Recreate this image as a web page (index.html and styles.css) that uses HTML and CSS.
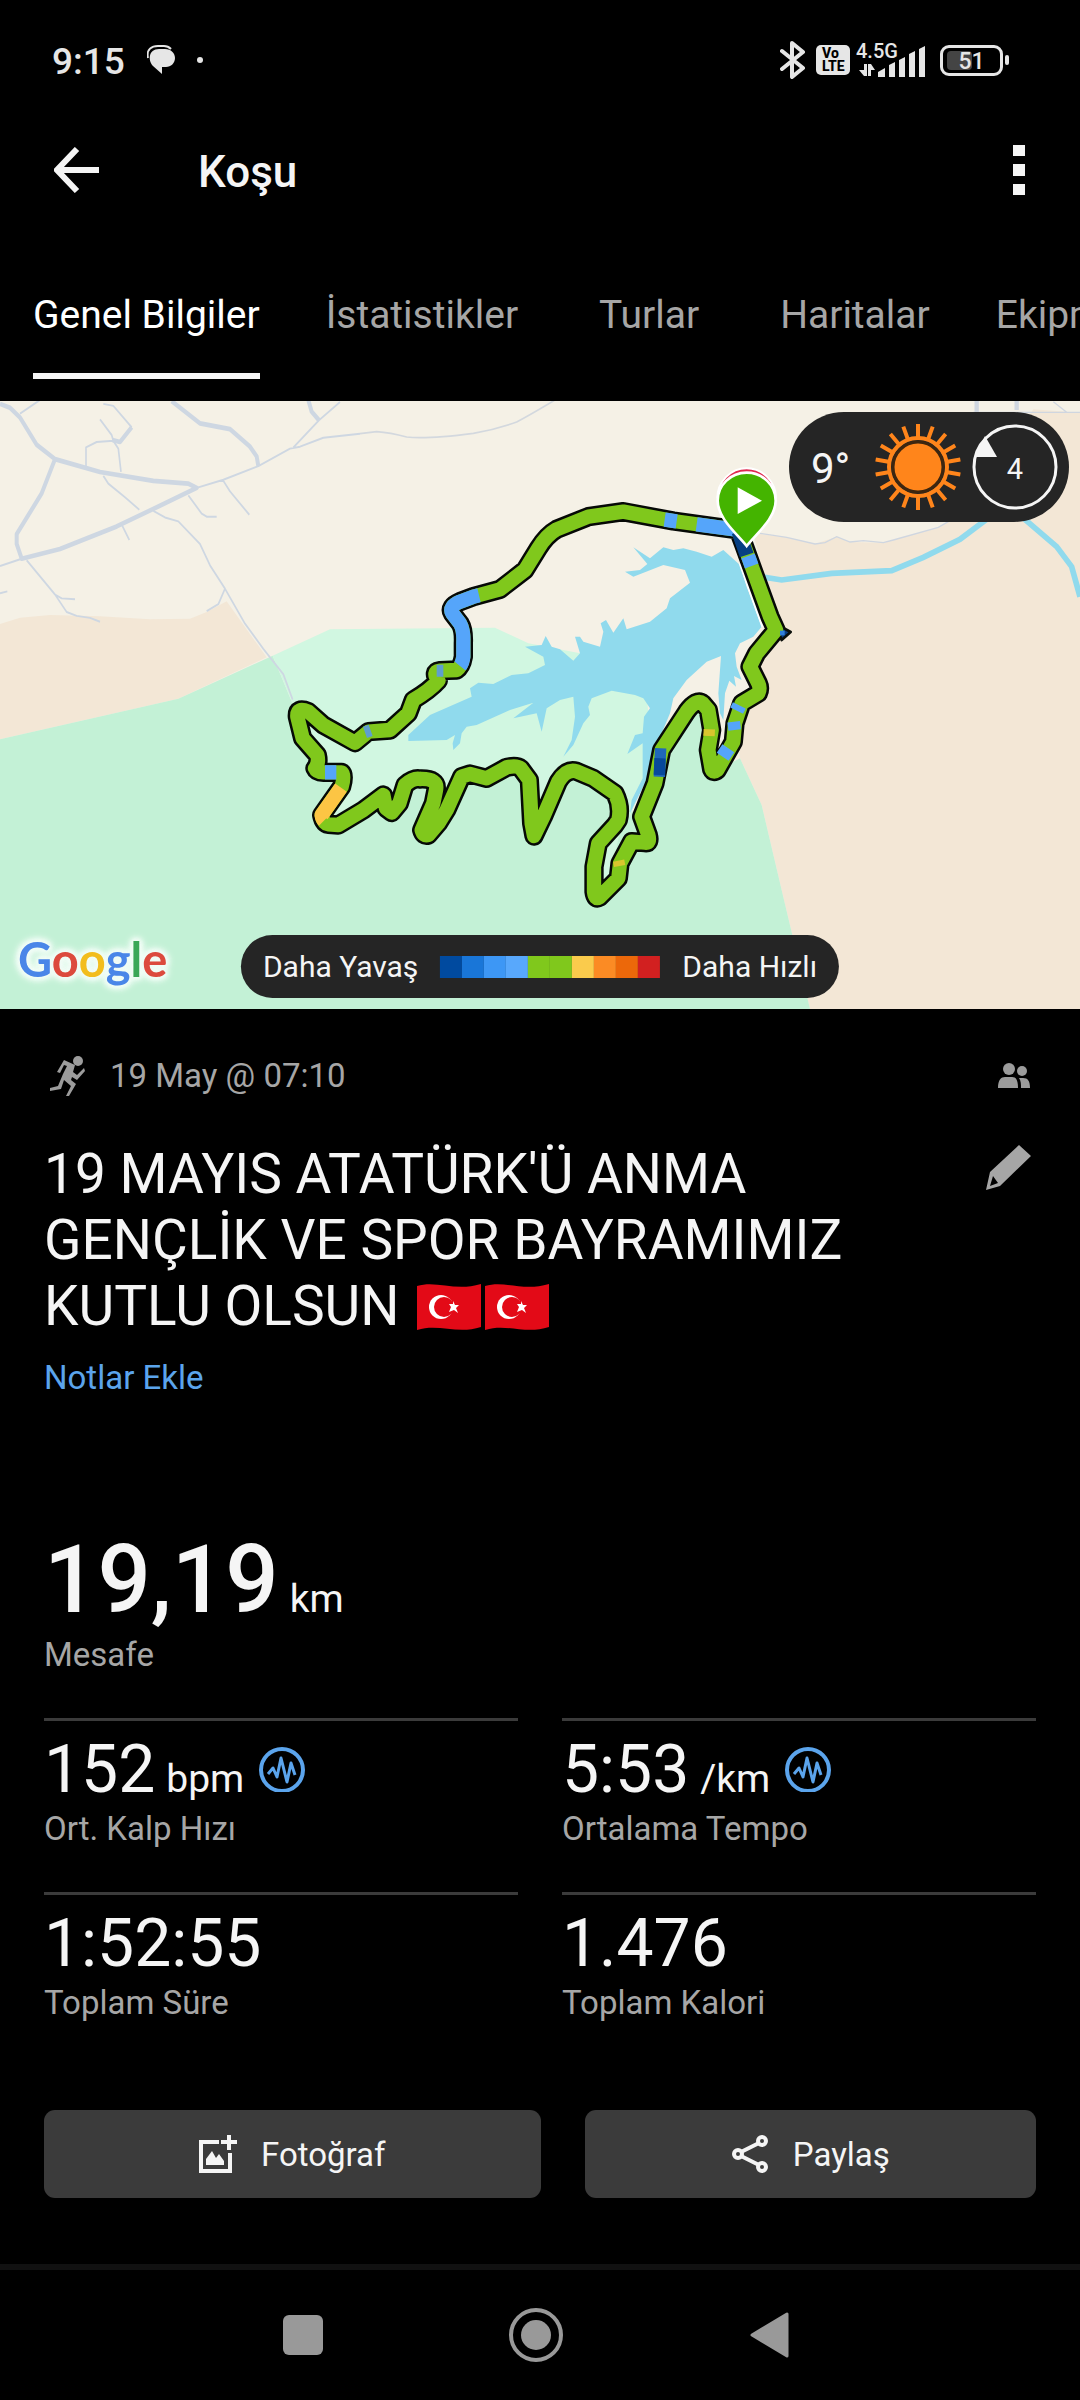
FILE: index.html
```html
<!DOCTYPE html>
<html lang="tr">
<head>
    <meta charset="UTF-8">
    <meta name="viewport" content="width=device-width, initial-scale=1.0">
    <title>Koşu</title>
    <link rel="stylesheet" href="styles.css">
</head>
<body>
    <div class="status-bar">
        <span class="clock">9:15</span>
        <svg class="chat-icon" width="28" height="30" viewBox="0 0 28 30">
            <path d="M1 13C-1 4 5 1 11 1h6c3 0 5 1 7 3" fill="none" stroke="#e6e6e6" stroke-width="2"/>
            <path d="M12 4h6c6 0 10 4 10 9s-4 9-9 9h-4v7L6 21C1 16 1 4 12 4z" fill="#e6e6e6"/>
        </svg>
        <span class="dot"></span>
        <div class="status-icons">
            <svg width="26" height="40" viewBox="0 0 26 40">
                <path d="M2 11 23 28 12 37V3l11 9L2 29" fill="none" stroke="#e6e6e6" stroke-width="4" stroke-linejoin="round" stroke-linecap="round"/>
            </svg>
            <span class="volte"><span>Vo</span><span>LTE</span></span>
            <div class="network">
                <span class="network-type">4.5G</span>
                <svg width="70" height="34" viewBox="0 0 70 34">
                    <g fill="#e6e6e6">
                        <path d="M3 27 8 33h3V21H8v6zM12 33h3v-6h4l-4-6h-3z"/>
                        <path d="M22 34v-5l7-4v9zM33 34V22l6-3v15zM43 34V17l6-3v20zM53 34V11l6-3v26zM63 34V6l6-3v31z"/>
                    </g>
                </svg>
            </div>
            <div class="battery"><span class="battery-level"></span><span class="battery-text">51</span></div>
            <span class="battery-tip"></span>
        </div>
    </div>

    <header class="app-bar">
        <button class="icon-button" aria-label="Geri">
            <svg width="46" height="46" viewBox="0 0 46 46">
                <path d="M23 2 3 23l20 21M3 23h42" fill="none" stroke="#f5f5f5" stroke-width="6"/>
            </svg>
        </button>
        <h1>Koşu</h1>
        <button class="icon-button more-button" aria-label="Menü">
            <svg width="12" height="50" viewBox="0 0 12 50">
                <path d="M0 0h12v11H0zM0 19h12v12H0zM0 39h12v11H0z" fill="#f5f5f5"/>
            </svg>
        </button>
    </header>

    <nav class="tabs">
        <button class="tab active"><span>Genel Bilgiler</span></button>
        <button class="tab"><span>İstatistikler</span></button>
        <button class="tab"><span>Turlar</span></button>
        <button class="tab"><span>Haritalar</span></button>
        <button class="tab"><span>Ekipman</span></button>
    </nav>

    <section class="map">
        <svg class="map-canvas" viewBox="-840 -237 3240 1824">
            <rect x="-840" y="-237" width="3240" height="1824" fill="#f5f1e6"/>
            <!-- land -->
            <path d="M-840 432-780 413-690 405-540 409-390 418-270 416-220 396-160 364-40 532-305 656-840 778z" fill="#f3e7d6"/>
            <path d="M1420 160 1520 172 1605 192 1670 170 1710 186 1810 188 1975 142 2010 120 2080 60 2260-212 2400-202V1587H1590L1512 1260 1445 975 1380 835 1365 730 1440 635 1410 560 1490 450z" fill="#f3e7d6"/>
            <path d="M-840 778-305 656-22 527 52 705 400 860 1000 870 1060 1000 1125 910 1145 810 1220 695 1255 665 1290 700 1300 875 1380 835 1445 975 1512 1260 1590 1587H-840z" fill="#c3f1d6"/>
            <path d="M-22 527 150 448 645 443 745 490 900 520 1100 640 1105 700 1090 900 1050 1010 1020 1050 990 1200 955 1230 955 1090 1020 990 1005 940 940 895 880 872 835 905 762 1070 755 1030 748 900 720 860 680 862 620 895 570 882 545 890 475 1030 430 1060 465 950 465 905 420 897 375 915 335 1000 310 945 175 1037 125 1005 192 910 190 877 105 870 112 825 68 775 52 705z" fill="#d1f7e1"/>
            <!-- water -->
            <g transform="translate(780 -120)" fill="#90daed">
                <path d="M550 330 600 375 620 440 665 560 640 590 600 610 585 640 590 680 605 720 582 708 588 740 568 722 555 760 550 840 540 820 535 760 543 648 500 665 440 720 400 775 390 820 365 880 340 930 330 1000 300 1060 270 1120 275 1080 308 1015 308 910 262 942 285 885 308 880 312 830 330 805 310 775 285 765 215 752 155 775 145 800 150 825 130 850 100 915 70 950 95 900 105 830 100 770 60 780 20 805 5 875-10 820-80 835-20 788-90 810-190 855-220 860-235 880-240 910-260 930-262 910-255 885-280 900-395 903-395 885-330 825-205 770-210 745-185 728-140 732-85 705-35 700 15 675 10 650-45 620 5 615 17 588 35 620 60 628 100 662 120 640 105 590 120 590 130 605 180 620 190 575 182 550 198 540 220 578 250 535 260 568 330 545 380 505 390 475 450 428 435 390 370 375 280 410 255 395 300 390 322 372 280 322 330 355 370 322 400 330 430 325 470 335 515 350z"/>
                <path d="M600 370 625 440 668 560" fill="none" stroke="#fff" stroke-width="8"/>
            </g>
            <g transform="translate(1440 -240)" fill="none">
                <path d="M0 530 65 540 215 520 395 512 490 472 600 418 690 350M785 350 890 440 935 500 960 590" stroke="#90daed" stroke-width="17"/>
                <path d="M0 400 80 412 165 432 195 428 230 410 270 426 310 422 370 428 400 420 535 382 565 365M640 37h320M880 5l40 32" stroke="#cfd6e0" stroke-width="4"/>
                <path d="M650 0V40M770 0V30" stroke="#cfd6e0" stroke-width="13"/>
            </g>
            <!-- roads -->
            <g transform="translate(-840 -240) scale(1 1.167)" fill="none" stroke="#ced7e2" stroke-linejoin="round">
                <path d="M0 10 30 20 60 45 110 115 165 152 300 185 460 208 565 215 590 226 460 280 350 325 180 383 65 408 50 370 50 345 125 240 165 152M515 3 600 60 690 75 750 120 770 145 775 170M925 0 935 30 957 52M395 70 360 108 337 103" stroke-width="12"/>
                <path d="M60 35 120 0M310 10 340 15 395 70M300 50 335 90 340 105M258 172V122L290 108 340 105 355 125 363 185M310 195 325 215 375 250 418 282M590 226 670 205 775 170 870 125 900 120 970 97 1080 87M880 122 957 52 1020 5M668 205 690 235 748 295M565 245 605 292 620 300 650 300M365 320 388 360M460 285 495 302 535 312 600 370 630 425 675 485 735 575 790 640 850 705 878 770M675 485 655 525 620 543M0 427 65 408M80 412 165 500 185 510 225 512M165 500 200 545 230 555 270 560 300 570M0 497 22 492" stroke-width="5"/>
            </g>
            <path d="M240-139 290-145Q330-142 380-129 440-122 580-140 650-152 710-174 750-195 825-240" fill="none" stroke="#d3d8de" stroke-width="5"/>
            <!-- route -->
            <defs>
                <path id="route" d="M1375 150 1180 123 1030 95 925 110 830 148 Q800 165 775 205L735 270 660 328 580 350 540 365Q505 380 517 400L540 430Q552 450 550 490V530Q545 560 530 570L480 572Q455 575 475 602 450 630 400 660L385 700 330 750 265 755 225 788 130 735 85 695Q50 680 52 710L68 775 112 825Q118 850 105 865 110 877 130 877H185Q195 885 185 920L125 1005Q130 1030 145 1033L175 1035 250 990 310 945 318 985 335 998 358 970 375 915Q400 893 420 897 475 895 468 930L460 970 425 1050Q430 1070 445 1065L475 1030 500 990 545 890 570 882 620 895 680 862Q710 855 722 865L748 900 755 1030 762 1068 790 1010 835 905Q860 865 890 874L940 895 1005 940Q1025 980 1015 1020L1005 1035 955 1090 942 1160V1235Q945 1260 958 1252L1015 1195 1020 1150 1055 1085 1095 1088Q1112 1090 1105 1065L1085 1010 1125 910 1145 810 1220 695Q1250 655 1268 670L1285 690 1295 750 1285 810 1295 868Q1300 880 1312 870L1360 785 1365 730 1385 670 1435 640Q1442 625 1435 610L1410 560 1430 520 1488 450 1470 410 1390 190z"/>
            </defs>
            <g fill="none" stroke-linejoin="round">
                <use href="#route" stroke="#060906" stroke-width="58"/>
                <path d="M1485 430 1532 456 1505 480z" fill="#0b3f82" stroke="#0a0f0a" stroke-width="8"/>
                <use href="#route" stroke="#80c81c" stroke-width="43"/>
                <g stroke="#55a5fa" stroke-width="43">
                    <path d="M597 346 580 350 540 365Q505 380 517 400L540 430Q552 450 550 490V530Q548 548 540 558"/>
                    <path d="M1154 119 1190 124"/>
                    <path d="M1250 133 1375 150"/>
                    <path d="M1404 228 1415 258"/>
                    <path d="M135 877h34"/>
                    <path d="M1364 750 1361 725" stroke-width="38"/>
                    <path d="M1370 692 1378 676"/>
                    <path d="M1345 805 1328 830"/>
                </g>
                <g stroke="#5f9fce" stroke-width="36">
                    <path d="M470 572h20M255 757 272 751"/>
                </g>
                <path d="M1376 155 1400 225" stroke="#063f82" stroke-width="43"/>
                <path d="M1142 805 1138 890" stroke="#1f68ba" stroke-width="34"/>
                <path d="M1140 835 1138 885" stroke="#07499b" stroke-width="34"/>
                <path d="M183 923 125 1005Q126 1016 132 1022" stroke="#fcc544" stroke-width="43"/>
                <path d="M1288 748 1287 768M1019 1158 1016 1142" stroke="#d9c72e" stroke-width="34"/>
                <path d="M1500 452h14v14h-14z" fill="#2f7fda"/>
            </g>
            <!-- finish and start pins -->
            <path d="M1312 55a88 90 0 0 1 176 0" fill="#e0284f" stroke="#fff" stroke-width="6"/>
            <path d="M1400 198C1370 160 1313 115 1313 62a87 84 0 0 1 174 0C1487 115 1430 160 1400 198z" fill="#44b400" stroke="#fff" stroke-width="8"/>
            <path d="M1373 22v80l73-40z" fill="#fff"/>
        </svg>

        <div class="weather">
            <span class="temperature">9°</span>
            <svg width="88" height="88" viewBox="-44 -44 88 88">
                <g stroke="#ff851b" stroke-width="4">
                    <path id="ray" d="M0-43V-30M0 43V30"/>
                    <use href="#ray" transform="rotate(20)"/>
                    <use href="#ray" transform="rotate(40)"/>
                    <use href="#ray" transform="rotate(60)"/>
                    <use href="#ray" transform="rotate(80)"/>
                    <use href="#ray" transform="rotate(100)"/>
                    <use href="#ray" transform="rotate(120)"/>
                    <use href="#ray" transform="rotate(140)"/>
                    <use href="#ray" transform="rotate(160)"/>
                </g>
                <circle r="29" fill="#252525" stroke="#ff851b" stroke-width="4"/>
                <circle r="25" fill="#ff851b" stroke="#3d2610" stroke-width="3"/>
            </svg>
            <div class="wind">
                <svg width="88" height="88" viewBox="-44 -44 88 88">
                    <circle r="41" fill="none" stroke="#f5f5f5" stroke-width="3"/>
                    <path d="M-30-31-18-10H-40z" fill="#f5f5f5"/>
                </svg>
                <span>4</span>
            </div>
        </div>

        <div class="google-logo"><span class="g-blue">G</span><span class="g-red">o</span><span class="g-yellow">o</span><span class="g-blue">g</span><span class="g-green">l</span><span class="g-red">e</span></div>

        <div class="legend">
            <span>Daha Yavaş</span>
            <div class="legend-scale">
                <i class="speed-1"></i><i class="speed-2"></i><i class="speed-3"></i><i class="speed-4"></i><i class="speed-5"></i><i class="speed-5"></i><i class="speed-6"></i><i class="speed-7"></i><i class="speed-8"></i><i class="speed-9"></i>
            </div>
            <span>Daha Hızlı</span>
        </div>
    </section>

    <main class="details">
        <div class="meta">
            <svg width="46" height="46" viewBox="0 0 46 46">
                <circle cx="34" cy="8" r="5" fill="#9c9c9c"/>
                <path d="M20 7 31 12 29 19 33 22 40 15 41 18 33 27 28 24 27 27 32 31 25 43H22L27 33 20 27 17 36 6 38V35L14 33 19 21 23 13 20 12 16 20 13 19z" fill="#9c9c9c"/>
            </svg>
            <span>19 May @ 07:10</span>
            <svg class="privacy-icon" width="34" height="26" viewBox="0 0 34 26">
                <g fill="#9c9c9c">
                    <circle cx="12" cy="6" r="6"/>
                    <circle cx="25" cy="8" r="5"/>
                    <path d="M1 25c0-8 3-11 7-11h7c4 0 6 3 6 11zM22 15h4c5 0 7 3 7 10h-9c0-4 0-7-2-10z"/>
                </g>
            </svg>
        </div>

        <div class="title-row">
            <h2>19 MAYIS ATATÜRK'Ü ANMA GENÇLİK VE SPOR BAYRAMIMIZ KUTLU OLSUN
                <span class="flags">
                    <svg width="64" height="48" viewBox="0 0 64 48">
                        <path d="M0 3C20-3 38 9 64 1V44C40 52 22 40 0 47z" fill="#e30a17"/>
                        <circle cx="24" cy="24" r="12" fill="#fff"/>
                        <circle cx="27" cy="24" r="10" fill="#e30a17"/>
                        <path d="M36 18l2 4 4 0-3 3 2 5-4-3-5 2 2-5-2-3h4z" fill="#fff"/>
                    </svg>
                    <svg width="64" height="48" viewBox="0 0 64 48">
                        <path d="M0 3C20-3 38 9 64 1V44C40 52 22 40 0 47z" fill="#e30a17"/>
                        <circle cx="24" cy="24" r="12" fill="#fff"/>
                        <circle cx="27" cy="24" r="10" fill="#e30a17"/>
                        <path d="M36 18l2 4 4 0-3 3 2 5-4-3-5 2 2-5-2-3h4z" fill="#fff"/>
                    </svg>
                </span>
            </h2>
            <button class="icon-button edit-button" aria-label="Düzenle">
                <svg width="52" height="52" viewBox="0 0 52 52">
                    <path d="M37 4 49 15 18 45 4 49 8 31zM11 35 8 45 16 42z" fill="#a6a6a6" fill-rule="evenodd"/>
                </svg>
            </button>
        </div>
        <a class="notes-link" href="#">Notlar Ekle</a>

        <div class="distance">
            <div class="value-row"><span class="big-value">19,19</span><span class="unit">km</span></div>
            <div class="label">Mesafe</div>
        </div>

        <div class="metrics">
            <div class="metric">
                <div class="value-row">
                    <span class="value">152</span><span class="unit">bpm</span>
                    <svg class="chart-icon" width="47" height="45" viewBox="0 0 47 45">
                        <g fill="none" stroke="#5ba4ec">
                            <circle cx="23" cy="23" r="21" stroke-width="4"/>
                            <path d="M9 27 14 21 18 30 22 11 28 35 32 16 36 28" stroke-width="3" stroke-linejoin="round"/>
                        </g>
                    </svg>
                </div>
                <div class="label">Ort. Kalp Hızı</div>
            </div>
            <div class="metric">
                <div class="value-row">
                    <span class="value">5:53</span><span class="unit">/km</span>
                    <svg class="chart-icon" width="47" height="45" viewBox="0 0 47 45">
                        <g fill="none" stroke="#5ba4ec">
                            <circle cx="23" cy="23" r="21" stroke-width="4"/>
                            <path d="M9 27 14 21 18 30 22 11 28 35 32 16 36 28" stroke-width="3" stroke-linejoin="round"/>
                        </g>
                    </svg>
                </div>
                <div class="label">Ortalama Tempo</div>
            </div>
            <div class="metric">
                <div class="value-row"><span class="value">1:52:55</span></div>
                <div class="label">Toplam Süre</div>
            </div>
            <div class="metric">
                <div class="value-row"><span class="value">1.476</span></div>
                <div class="label">Toplam Kalori</div>
            </div>
        </div>

        <div class="actions">
            <button class="action photo-action">
                <svg width="38" height="38" viewBox="0 0 38 38">
                    <path d="M20 7H2v29h29V18" fill="none" stroke="#f5f5f5" stroke-width="4"/>
                    <path d="M30 0v15M22 7h16" stroke="#f5f5f5" stroke-width="4"/>
                    <path d="M7 30v-6l6-8 4 7 3-4 5 7v4z" fill="#f5f5f5"/>
                </svg>
                Fotoğraf
            </button>
            <button class="action share-action">
                <svg width="38" height="38" viewBox="0 0 38 38">
                    <g fill="none" stroke="#f5f5f5" stroke-width="4">
                        <path d="M28 8 10 17M10 21l18 9"/>
                        <circle cx="31" cy="6" r="4"/>
                        <circle cx="7" cy="19" r="4"/>
                        <circle cx="31" cy="32" r="4"/>
                    </g>
                </svg>
                Paylaş
            </button>
        </div>
    </main>

    <footer class="system-nav">
        <button class="icon-button" aria-label="Son uygulamalar">
            <svg width="56" height="56" viewBox="0 0 56 56"><rect x="8" y="8" width="40" height="40" rx="6" fill="#999"/></svg>
        </button>
        <button class="icon-button" aria-label="Ana ekran">
            <svg width="56" height="56" viewBox="0 0 56 56">
                <circle cx="28" cy="28" r="25" fill="none" stroke="#999" stroke-width="4"/>
                <circle cx="28" cy="28" r="15" fill="#999"/>
            </svg>
        </button>
        <button class="icon-button" aria-label="Geri">
            <svg width="56" height="56" viewBox="0 0 56 56"><path d="M46 7v42L11 28z" fill="#999" stroke="#999" stroke-width="3" stroke-linejoin="round"/></svg>
        </button>
    </footer>
</body>
</html>
```
FILE: styles.css
```css
body {
    margin: 0;
    background-color: #000;
    color: #f5f5f5;
    font-family: Roboto, "Liberation Sans", sans-serif;
    overflow-x: hidden;
}
svg {
    display: block;
    flex-shrink: 0;
}
button {
    font-family: inherit;
    color: inherit;
    border: none;
    background: none;
    padding: 0;
    cursor: pointer;
}
.status-bar {
    display: flex;
    align-items: center;
    height: 120px;
    padding: 0 71px 0 52px;
    color: #e6e6e6;
}
.clock {
    padding-top: 3px;
    font-size: 37px;
    font-weight: 500;
    line-height: 44px;
}
.chat-icon {
    margin-left: 22px;
}
.dot {
    width: 6px;
    height: 6px;
    margin-left: 22px;
    border-radius: 50%;
    background-color: #e6e6e6;
}
.status-icons {
    display: flex;
    align-items: center;
    margin-left: auto;
}
.volte {
    display: flex;
    flex-direction: column;
    box-sizing: border-box;
    width: 34px;
    height: 30px;
    margin: 0 6px 0 10px;
    padding: 2px 0 0 6px;
    border-radius: 5px;
    background-color: #e6e6e6;
    color: #000;
    font-size: 14px;
    font-weight: 800;
    line-height: 13px;
}
.network {
    position: relative;
    width: 70px;
    height: 34px;
    margin-right: 14px;
}
.network-type {
    position: absolute;
    top: -3px;
    left: 0;
    font-size: 20px;
    font-weight: 500;
    line-height: 22px;
}
.battery {
    position: relative;
    box-sizing: border-box;
    width: 63px;
    height: 31px;
    border: 3px solid #e6e6e6;
    border-radius: 9px;
    text-align: center;
}
.battery-level {
    position: absolute;
    top: 3px;
    left: 4px;
    width: 25px;
    height: 19px;
    border-radius: 4px;
    background-color: #444;
}
.battery-text {
    position: relative;
    display: block;
    font-size: 23px;
    font-weight: 500;
    line-height: 27px;
}
.battery-tip {
    width: 4px;
    height: 10px;
    margin-left: 2px;
    border-radius: 2px;
    background-color: #e6e6e6;
}
.app-bar {
    display: flex;
    align-items: center;
    height: 100px;
    padding: 0 55px 0 54px;
}
.app-bar h1 {
    margin: 0 0 0 98px;
    padding-top: 3px;
    font-size: 44px;
    font-weight: 500;
    line-height: 52px;
}
.more-button {
    margin-left: auto;
}
.tabs {
    display: flex;
    padding: 72px 0 22px;
    overflow: hidden;
}
.tab {
    flex-shrink: 0;
    min-width: 196px;
    padding: 0 33px;
    font-size: 39px;
    line-height: 46px;
    color: #a6a6a6;
}
.tab span {
    display: inline-block;
    padding-bottom: 35px;
    border-bottom: 6px solid transparent;
}
.tab.active {
    color: #fff;
}
.tab.active span {
    border-color: #f5f5f5;
}
.map {
    position: relative;
}
.map-canvas {
    width: 100%;
    height: auto;
}
.weather {
    position: absolute;
    top: 11px;
    right: 11px;
    display: flex;
    align-items: center;
    gap: 9px;
    box-sizing: border-box;
    width: 280px;
    height: 110px;
    padding: 0 10px 0 22px;
    border-radius: 55px;
    background-color: #252525;
}
.temperature {
    margin-right: auto;
    padding-top: 4px;
    font-size: 42px;
    line-height: 50px;
}
.wind {
    position: relative;
}
.wind span {
    position: absolute;
    inset: 0;
    font-size: 29px;
    line-height: 92px;
    text-align: center;
}
.google-logo {
    position: absolute;
    left: 18px;
    bottom: 22px;
    font-family: Lato, sans-serif;
    font-size: 47px;
    font-weight: 700;
    line-height: 56px;
    filter: drop-shadow(0 0 2px #f0fcf5) drop-shadow(0 0 2px #f0fcf5) drop-shadow(0 0 3px #f0fcf5) drop-shadow(0 0 2px #f0fcf5);
}
.g-blue {
    color: #4a86e8;
}
.g-red {
    color: #dc4a3d;
}
.g-yellow {
    color: #f2bd1d;
}
.g-green {
    color: #3aa757;
}
.legend {
    position: absolute;
    left: 50%;
    bottom: 11px;
    transform: translateX(-50%);
    display: flex;
    align-items: center;
    gap: 22px;
    height: 63px;
    padding: 0 22px;
    border-radius: 32px;
    background-color: #252525;
    font-size: 30px;
    white-space: nowrap;
}
.legend-scale {
    display: flex;
}
.legend-scale i {
    width: 22px;
    height: 22px;
}
.speed-1 {
    background-color: #004a9f;
}
.speed-2 {
    background-color: #1976d8;
}
.speed-3 {
    background-color: #3d97f5;
}
.speed-4 {
    background-color: #58a8fc;
}
.speed-5 {
    background-color: #80c81c;
}
.speed-6 {
    background-color: #facb4c;
}
.speed-7 {
    background-color: #fb8b24;
}
.speed-8 {
    background-color: #ec680a;
}
.speed-9 {
    background-color: #d22020;
}
.details {
    padding: 44px 44px 66px;
}
.meta {
    display: flex;
    align-items: center;
    gap: 20px;
    color: #a6a6a6;
    font-size: 33px;
    line-height: 46px;
}
.privacy-icon {
    margin: 0 5px 0 auto;
}
.title-row {
    display: flex;
    justify-content: space-between;
    align-items: flex-start;
    margin-top: 42px;
}
.title-row h2 {
    max-width: 840px;
    margin: 0;
    font-size: 55px;
    font-weight: 400;
    line-height: 66px;
}
.flags {
    display: inline-flex;
    gap: 4px;
    margin-left: 4px;
    vertical-align: -6px;
    height: 48px;
}
.edit-button {
    margin-right: 2px;
}
.notes-link {
    display: block;
    width: fit-content;
    margin-top: 20px;
    color: #5ba4ec;
    font-size: 33px;
    line-height: 38px;
    text-decoration: none;
}
.distance {
    margin-top: 128px;
}
.value-row {
    display: flex;
    align-items: baseline;
    gap: 11px;
}
.big-value {
    font-size: 94px;
    font-weight: 500;
    line-height: 110px;
}
.value {
    font-size: 66px;
    line-height: 78px;
}
.unit {
    font-size: 39px;
    line-height: 44px;
}
.chart-icon {
    margin-left: 4px;
}
.label {
    margin-top: 1px;
    color: #a6a6a6;
    font-size: 33px;
    line-height: 38px;
}
.metrics {
    display: grid;
    grid-template-columns: 1fr 1fr;
    gap: 44px;
    margin-top: 44px;
}
.metric {
    padding-top: 10px;
    border-top: 3px solid #3b3b3b;
}
.actions {
    display: flex;
    gap: 44px;
    margin-top: 88px;
}
.action {
    display: flex;
    align-items: center;
    justify-content: center;
    gap: 24px;
    height: 88px;
    border-radius: 11px;
    background-color: #3b3b3b;
    font-size: 33px;
}
.photo-action {
    flex: 11;
}
.share-action {
    flex: 10;
}
.system-nav {
    display: flex;
    align-items: center;
    justify-content: center;
    gap: 177px;
    height: 130px;
    padding-right: 8px;
    border-top: 6px solid #111;
}
```
